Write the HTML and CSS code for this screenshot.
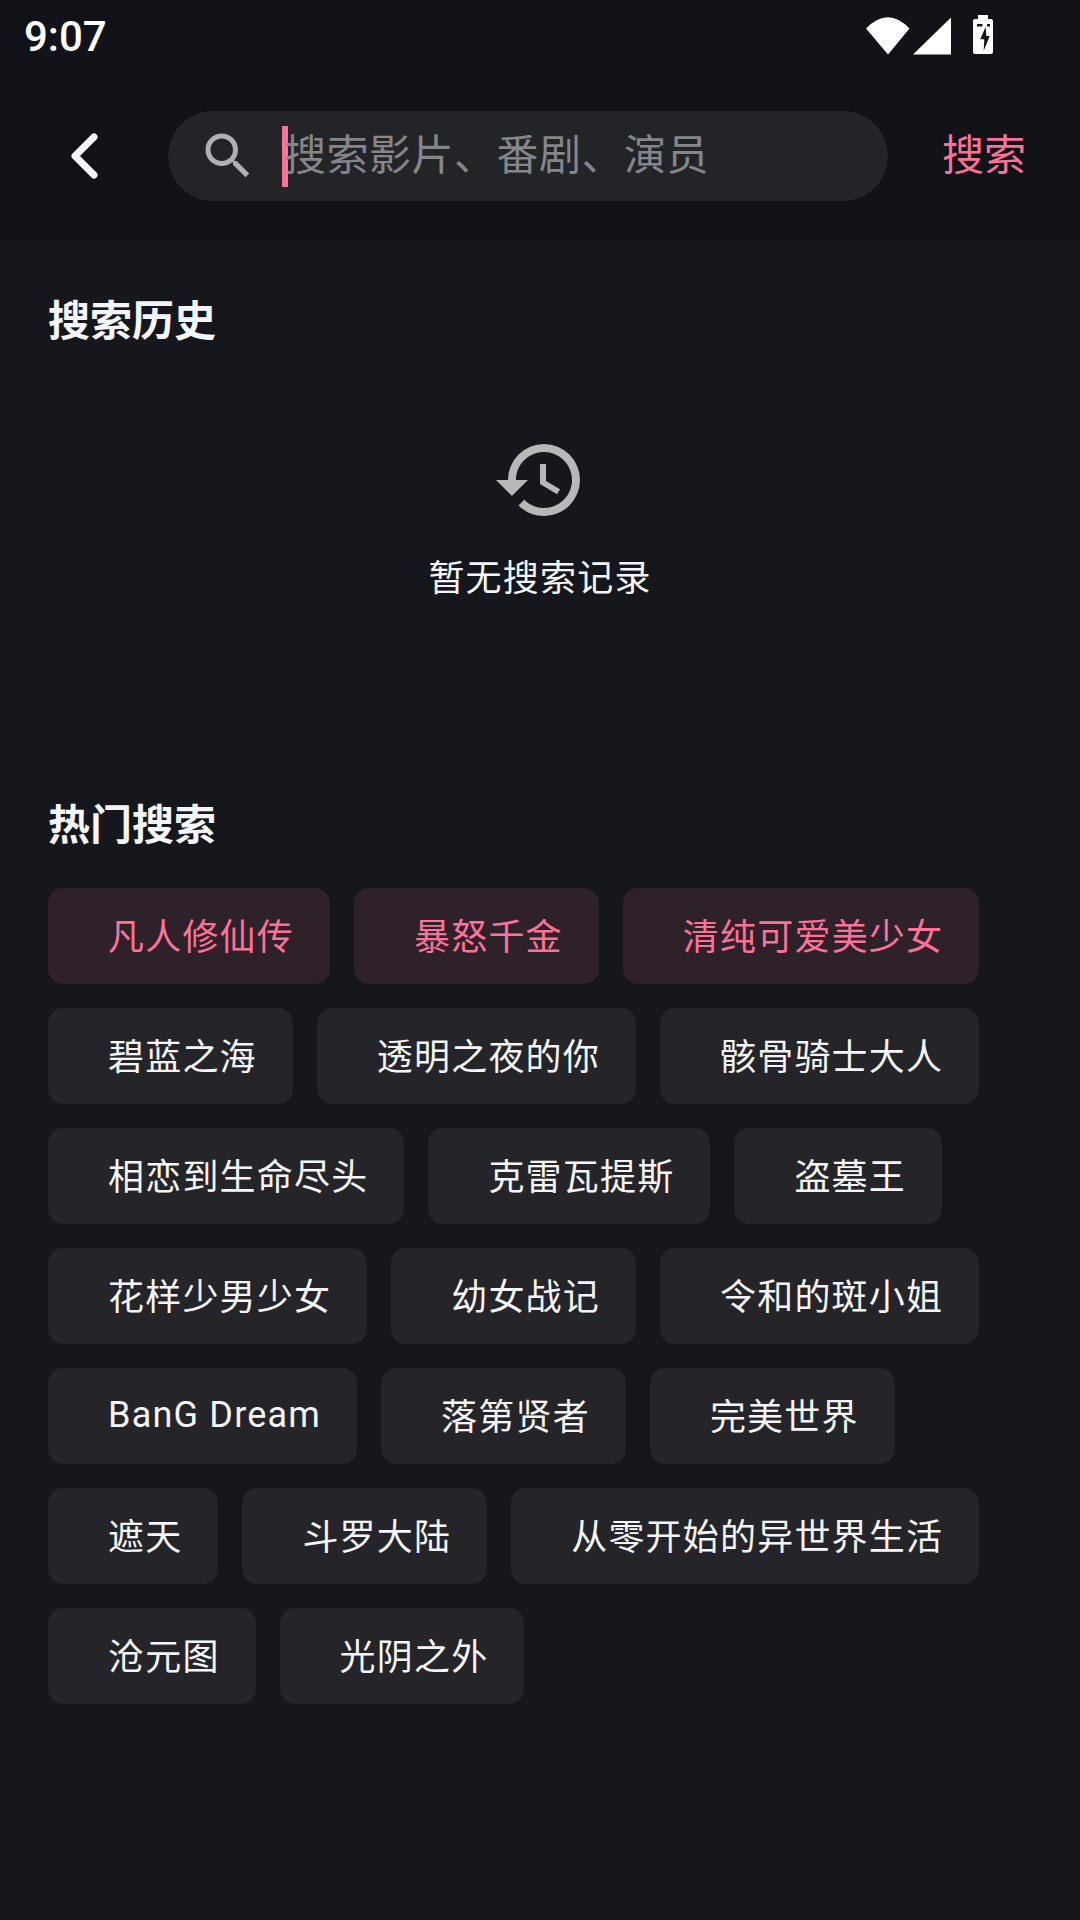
FILE: index.html
```html
<!DOCTYPE html>
<html lang="zh-CN">
<head>
    <meta charset="UTF-8">
    <meta name="viewport" content="width=device-width, initial-scale=1.0">
    <title>搜索</title>
    <link rel="stylesheet" href="styles.css">
</head>
<body>
    <div class="top">
        <!-- Status bar -->
        <div class="status-bar">
            <span class="time">9:07</span>
            <div class="status-icons">
                <svg class="wifi" width="44" height="38" viewBox="0 0 44 38"><path d="M22 37.5 0 11.5Q22-11 43.5 11.5Z" fill="#fff"/></svg>
                <svg class="signal" width="38" height="38" viewBox="0 0 38 38"><path d="M38 .5V37.5H0Z" fill="#fff"/></svg>
                <svg class="battery" width="20" height="39" viewBox="0 0 20 39"><path fill-rule="evenodd" d="M5 0h10v4h3a2 2 0 0 1 2 2v31a2 2 0 0 1-2 2H2a2 2 0 0 1-2-2V6a2 2 0 0 1 2-2h3zM4 9v2.5h5.5V9zM14 9v2.5h3V9zM12.7 11.7 7.3 24.3h4l-.6 11.4 6-14.7h-3.4z" fill="#fff"/></svg>
            </div>
        </div>

        <!-- Search header -->
        <div class="search-row">
            <svg class="back" width="34" height="54" viewBox="0 0 34 54"><path d="M27 8 8 27l19 19" fill="none" stroke="#f4f5fa" stroke-width="7" stroke-linecap="round" stroke-linejoin="round"/></svg>
            <div class="search-box">
                <svg class="search-icon" width="60" height="60" viewBox="0 0 24 24"><path fill="#aeb0b4" d="M15.5 14h-.79l-.28-.27A6.471 6.471 0 0 0 16 9.5 6.5 6.5 0 1 0 9.5 16c1.61 0 3.09-.59 4.23-1.57l.27.28v.79l5 4.99L20.49 19l-4.99-5zm-6 0C7.01 14 5 11.99 5 9.5S7.01 5 9.5 5 14 7.01 14 9.5 11.99 14 9.5 14z"/></svg>
                <span class="cursor"></span>
                <span class="placeholder">搜索影片、番剧、演员</span>
            </div>
            <span class="search-btn">搜索</span>
        </div>
    </div>

    <div class="content">
        <h2 class="section-title">搜索历史</h2>
        <div class="empty">
            <svg class="history-icon" width="96" height="96" viewBox="0 0 24 24"><path fill="#b8b8b8" d="M13 3a9 9 0 0 0-9 9H1l3.89 3.89.07.14L9 12H6c0-3.87 3.13-7 7-7s7 3.13 7 7-3.13 7-7 7c-1.93 0-3.68-.79-4.94-2.06l-1.42 1.42A8.954 8.954 0 0 0 13 21a9 9 0 0 0 0-18zm-1 5v5l4.28 2.54.72-1.21-3.5-2.08V8H12z"/></svg>
            <div class="empty-text">暂无搜索记录</div>
        </div>

        <h2 class="section-title">热门搜索</h2>
        <div class="chips">
            <div class="chip hot">凡人修仙传</div>
            <div class="chip hot">暴怒千金</div>
            <div class="chip hot">清纯可爱美少女</div>
            <div class="chip">碧蓝之海</div>
            <div class="chip">透明之夜的你</div>
            <div class="chip">骸骨骑士大人</div>
            <div class="chip">相恋到生命尽头</div>
            <div class="chip">克雷瓦提斯</div>
            <div class="chip">盗墓王</div>
            <div class="chip">花样少男少女</div>
            <div class="chip">幼女战记</div>
            <div class="chip">令和的斑小姐</div>
            <div class="chip latin">BanG Dream</div>
            <div class="chip">落第贤者</div>
            <div class="chip">完美世界</div>
            <div class="chip">遮天</div>
            <div class="chip">斗罗大陆</div>
            <div class="chip">从零开始的异世界生活</div>
            <div class="chip">沧元图</div>
            <div class="chip">光阴之外</div>
        </div>
    </div>
</body>
</html>
```

FILE: styles.css
```css
* {
    box-sizing: border-box;
}

html,
body {
    height: 100%;
}

body {
    margin: 0;
    background-color: #16171c;
    color: #f4f5fa;
    font-family: Roboto, "Noto Sans CJK SC", sans-serif;
}

.top {
    height: 240px;
    background-color: #111318;
}

.status-bar {
    height: 66px;
    padding: 15px 0 0 24px;
    display: flex;
    justify-content: space-between;
}

.time {
    font-size: 42px;
    font-weight: 500;
    line-height: 44px;
    color: #fff;
}

.status-icons {
    display: flex;
    align-items: flex-start;
    padding: 0 87px 0 0;
}

.wifi {
    margin: 2px 3px 0 0;
}

.signal {
    margin: 2px 22px 0 0;
}

.battery {
    margin-top: 0;
}

.search-row {
    height: 90px;
    margin-top: 45px;
    padding-left: 67px;
    display: flex;
    align-items: center;
}

.back {
    flex: none;
}

.search-box {
    width: 720px;
    height: 90px;
    margin-left: 67px;
    border-radius: 45px;
    background-color: #232428;
    display: flex;
    align-items: center;
}

.search-icon {
    margin-left: 30px;
    flex: none;
}

.cursor {
    width: 6px;
    height: 61px;
    margin-left: 24px;
    background-color: #fb7299;
    flex: none;
}

.placeholder {
    margin-left: -4px;
    font-size: 42px;
    letter-spacing: 0.5px;
    line-height: 90px;
    color: #85868a;
}

.search-btn {
    margin-left: 54px;
    font-size: 42px;
    line-height: 84px;
    color: #fb7299;
}

.content {
    padding: 0 48px;
}

.section-title {
    margin: 0;
    font-size: 42px;
    font-weight: 700;
    line-height: 60px;
}

.content > .section-title:first-child {
    padding-top: 52px;
    height: 112px;
}

.empty {
    height: 444px;
    padding-top: 80px;
    display: flex;
    flex-direction: column;
    align-items: center;
}

.history-icon {
    display: block;
}

.empty-text {
    margin-top: 26px;
    font-size: 36px;
    letter-spacing: 1.2px;
    line-height: 50px;
}

.chips {
    margin-top: 32px;
    display: flex;
    flex-wrap: wrap;
    gap: 24px;
}

.chip {
    height: 96px;
    padding: 0 36px 0 60px;
    border-radius: 15px;
    background-color: #252429;
    font-size: 36px;
    letter-spacing: 1.2px;
    line-height: 100px;
}

.chip.latin {
    line-height: 94px;
}

.chip.hot {
    background-color: #2e2129;
    color: #fb7299;
}
```
